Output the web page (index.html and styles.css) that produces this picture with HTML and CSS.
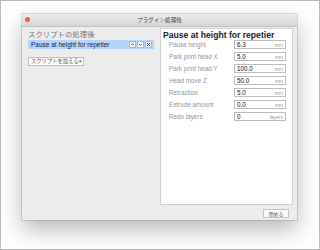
FILE: index.html
```html
<!DOCTYPE html>
<html lang="ja">
<head>
    <meta charset="UTF-8">
    <title>プラグイン処理後</title>
    <link rel="stylesheet" href="styles.css">
</head>
<body>

<div class="screen">
    <div class="window">
        <div class="titlebar">
            <span class="dot"></span>
            <span class="title">プラグイン処理後</span>
        </div>

        <div class="main">
            <div class="left">
                <div class="caption">スクリプトの処理後</div>
                <div class="script-row">
                    <span class="script-name">Pause at height for repetier</span>
                    <span class="mini-btns">
                        <span class="mini"><svg width="5" height="5" viewBox="0 0 5 5"><path d="M1 3.3 L2.5 1.6 L4 3.3" fill="none" stroke="#444" stroke-width=".8"/></svg></span>
                        <span class="mini"><svg width="5" height="5" viewBox="0 0 5 5"><path d="M1 1.8 L2.5 3.5 L4 1.8" fill="none" stroke="#444" stroke-width=".8"/></svg></span>
                        <span class="mini"><svg width="5" height="5" viewBox="0 0 5 5"><path d="M1.2 1.2 L3.8 3.8 M3.8 1.2 L1.2 3.8" fill="none" stroke="#222" stroke-width="1"/></svg></span>
                    </span>
                </div>
                <div class="add-btn">スクリプトを加える&#9662;</div>
            </div>

            <div class="right">
                <div class="heading">Pause at height for repetier</div>
                <div class="form">
                    <div class="row"><span class="label">Pause height</span><span class="field"><b>6.3</b><i>mm</i></span></div>
                    <div class="row"><span class="label">Park print head X</span><span class="field"><b>5.0</b><i>mm</i></span></div>
                    <div class="row"><span class="label">Park print head Y</span><span class="field"><b>100.0</b><i>mm</i></span></div>
                    <div class="row"><span class="label">Head move Z</span><span class="field"><b>50.0</b><i>mm</i></span></div>
                    <div class="row"><span class="label">Retraction</span><span class="field"><b>5.0</b><i>mm</i></span></div>
                    <div class="row"><span class="label">Extrude amount</span><span class="field"><b>0.0</b><i>mm</i></span></div>
                    <div class="row"><span class="label">Redo layers</span><span class="field"><b>0</b><i>layers</i></span></div>
                </div>
            </div>
        </div>

        <div class="footer">
            <span class="close-btn">閉める</span>
        </div>
    </div>
</div>

</body>
</html>
```

FILE: styles.css
```css
html, body, div, span {
    margin: 0;
    padding: 0;
}
body {
    background-color: #fff;
    font-family: "Liberation Sans", "Noto Sans CJK JP", sans-serif;
}
.screen {
    width: 320px;
    height: 250px;
    box-sizing: border-box;
    border: 1px solid #b9b9b9;
    background-color: #fff;
    padding: 13px 0 0 21px;
}
.window {
    width: 275px;
    height: 206px;
    display: flex;
    flex-direction: column;
    background-color: #ececec;
    box-shadow: 0 10px 22px rgba(0,0,0,.28), 0 0 0 1px rgba(0,0,0,.12);
}
.titlebar {
    height: 12px;
    flex: none;
    display: flex;
    align-items: center;
    justify-content: center;
    position: relative;
    background: linear-gradient(#ececec, #d6d6d6);
    border-bottom: 1px solid #c2c2c2;
}
.dot {
    position: absolute;
    left: 3px;
    top: 3px;
    width: 5px;
    height: 5px;
    border-radius: 50%;
    background-color: #fc5a54;
}
.title {
    font-family: "Noto Sans CJK JP", sans-serif;
    font-size: 5.6px;
    color: #4a4a4a;
}
.main {
    flex: 1;
    display: flex;
}
.left {
    width: 138px;
    box-sizing: border-box;
    padding: 2px 6px 0 6px;
}
.caption {
    font-family: "Noto Sans CJK JP", sans-serif;
    font-size: 7.4px;
    line-height: 10px;
    color: #767676;
}
.script-row {
    margin-top: 1px;
    height: 9px;
    display: flex;
    align-items: center;
    justify-content: space-between;
    background-color: #b6d4f8;
    padding-left: 3px;
    padding-right: 2px;
}
.script-name {
    font-size: 6.5px;
    color: #14233a;
}
.mini-btns {
    display: flex;
    gap: 1px;
}
.mini {
    width: 7px;
    height: 7px;
    background-color: #fafafa;
    border: 1px solid #b8b8b8;
    box-sizing: border-box;
    display: flex;
    align-items: center;
    justify-content: center;
}
.add-btn {
    display: inline-block;
    white-space: nowrap;
    margin-top: 3px;
    height: 9px;
    box-sizing: border-box;
    border: 1px solid #c0c0c0;
    background-color: #fbfbfb;
    font-family: "Noto Sans CJK JP", sans-serif;
    font-size: 5.3px;
    line-height: 7px;
    padding: 0 1px 0 2px;
    color: #5a5a5a;
}
.right {
    width: 133px;
    margin: 1px 0 1px 0;
    box-sizing: border-box;
    background-color: #fff;
    border: 1px solid #d4d4d4;
    padding: 1px 0 0 2px;
}
.heading {
    font-size: 8.6px;
    font-weight: bold;
    line-height: 10px;
    color: #222;
}
.form {
    padding-left: 6px;
    display: flex;
    flex-direction: column;
    gap: 3px;
}
.row {
    display: flex;
    align-items: center;
    height: 9px;
}
.label {
    width: 65px;
    font-size: 6.3px;
    color: #959595;
}
.field {
    width: 52px;
    height: 9px;
    box-sizing: border-box;
    border: 1px solid #bdbdbd;
    display: flex;
    align-items: center;
    justify-content: space-between;
    padding: 0 2px 0 2px;
}
.field b {
    font-weight: normal;
    font-size: 6.3px;
    color: #111;
}
.field i {
    font-style: normal;
    font-size: 5px;
    color: #9a9a9a;
}
.footer {
    height: 14px;
    flex: none;
    display: flex;
    align-items: center;
    justify-content: flex-end;
    padding-right: 8px;
}
.close-btn {
    width: 26px;
    height: 9px;
    box-sizing: border-box;
    border: 1px solid #c4c4c4;
    background-color: #f9f9f9;
    font-family: "Noto Sans CJK JP", sans-serif;
    font-size: 4.8px;
    line-height: 7px;
    text-align: center;
    color: #555;
}
```
